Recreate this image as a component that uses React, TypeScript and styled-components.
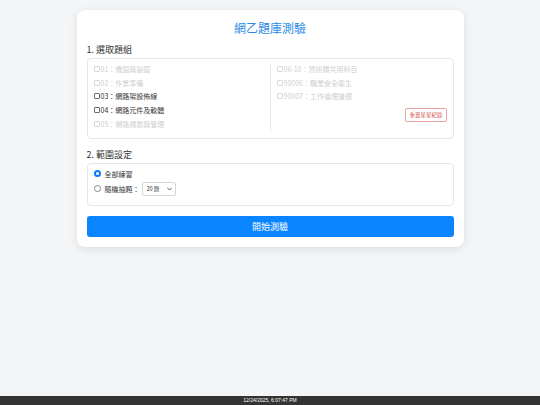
import React, { useState } from 'react';
import styled, { createGlobalStyle } from 'styled-components';

const GlobalStyle = createGlobalStyle`
  html, body {
    margin: 0;
    padding: 0;
    background: #f4f5f7;
    font-family: "Noto Sans CJK TC", "Liberation Sans", sans-serif;
    color: #333;
  }
  * { box-sizing: border-box; }
`;

const Page = styled.div`
  min-height: 100vh;
  display: flex;
  flex-direction: column;
`;

const Main = styled.main`
  flex: 1;
  padding-top: 10px;
`;

const Card = styled.div`
  width: 387px;
  margin: 0 auto;
  background: #fff;
  border-radius: 8px;
  box-shadow: 0 2px 8px rgba(0, 0, 0, 0.1);
  padding: 9px 10px 10px;
`;

const Title = styled.h1`
  margin: 0 0 6px;
  text-align: center;
  font-size: 12px;
  line-height: 18px;
  font-weight: 400;
  color: #2b8be6;
`;

const SectionTitle = styled.h2`
  margin: 0 0 2px;
  font-size: 9px;
  line-height: 13px;
  font-weight: 400;
  color: #333;
`;

const Box = styled.div`
  border: 1px solid #e6e6e6;
  border-radius: 4px;
  padding: 3px 6px 7px;
  margin-bottom: 9px;
`;

const Columns = styled.div`
  display: grid;
  grid-template-columns: 1fr 1px 1fr;
  column-gap: 6px;
`;

const Divider = styled.div`
  background: #e6e6e6;
  margin: 2px 0 0;
`;

const Column = styled.div`
  display: flex;
  flex-direction: column;
`;

const Item = styled.label<{ $disabled?: boolean }>`
  display: flex;
  align-items: center;
  gap: 1px;
  height: 13.75px;
  font-size: 7px;
  color: #333;
  opacity: ${({ $disabled }) => ($disabled ? 0.25 : 1)};
`;

const Check = styled.input`
  appearance: none;
  width: 6px;
  height: 6px;
  margin: 0;
  border: 1px solid #6b6b6b;
  border-radius: 1px;
  background: #fff;
`;

const ResetRow = styled.div`
  display: flex;
  justify-content: flex-end;
  margin-top: 5px;
`;

const ResetButton = styled.button`
  font-family: inherit;
  font-size: 5.5px;
  line-height: 8px;
  padding: 2px 3px;
  color: #d9534f;
  background: #fff;
  border: 1px solid #e9a3a1;
  border-radius: 2px;
`;

const RangeBox = styled(Box)`
  padding: 3px 6px 9px;
  margin-bottom: 10px;
  display: flex;
  flex-direction: column;
  gap: 1px;
`;

const RadioRow = styled.label`
  display: flex;
  align-items: center;
  gap: 3px;
  height: 14px;
  font-size: 7px;
  color: #333;
`;

const Radio = styled.input`
  appearance: none;
  width: 7px;
  height: 7px;
  margin: 0 1px 0 0;
  border-radius: 50%;
  border: 1px solid #8a8a8a;
  background: #fff;

  &:checked {
    border: 2px solid #0a7cff;
  }
`;

const SelectWrap = styled.div`
  position: relative;
  margin-left: -1px;
`;

const Select = styled.select`
  appearance: none;
  font-family: inherit;
  font-size: 5.5px;
  height: 14px;
  width: 34px;
  padding: 0 4px;
  border: 1px solid #d6d6d6;
  border-radius: 2px;
  background: #fff;
  color: #333;
`;

const Chevron = styled.svg`
  position: absolute;
  right: 4px;
  top: 5px;
  width: 5px;
  height: 4px;
  pointer-events: none;
`;

const StartButton = styled.button`
  display: block;
  width: 100%;
  height: 21px;
  border: none;
  border-radius: 3px;
  background: #0a84ff;
  color: #fff;
  font-family: inherit;
  font-size: 9px;
`;

const Footer = styled.footer`
  height: 9px;
  background: #333;
  color: #fff;
  font-family: "Liberation Sans", sans-serif;
  font-size: 5px;
  line-height: 9px;
  text-align: center;
`;

const leftItems = [
  { label: '01：識圖與製圖', disabled: true },
  { label: '02：作業準備', disabled: true },
  { label: '03：網路架設佈線', disabled: false },
  { label: '04：網路元件及軟體', disabled: false },
  { label: '05：網路規劃與管理', disabled: true },
];

const rightItems = [
  { label: '06-10：資訊類共用科目', disabled: true },
  { label: '90006：職業安全衛生', disabled: true },
  { label: '90007：工作倫理道德', disabled: true },
];

const App: React.FC = () => {
  const [mode, setMode] = useState('all');

  return (
    <Page>
      <GlobalStyle />
      <Main>
        <Card>
          <Title>網乙題庫測驗</Title>

          <SectionTitle>1. 選取題組</SectionTitle>
          <Box>
            <Columns>
              <Column>
                {leftItems.map((it) => (
                  <Item key={it.label} $disabled={it.disabled}>
                    <Check type="checkbox" disabled={it.disabled} />
                    {it.label}
                  </Item>
                ))}
              </Column>
              <Divider />
              <Column>
                {rightItems.map((it) => (
                  <Item key={it.label} $disabled={it.disabled}>
                    <Check type="checkbox" disabled={it.disabled} />
                    {it.label}
                  </Item>
                ))}
                <ResetRow>
                  <ResetButton>重置星星紀錄</ResetButton>
                </ResetRow>
              </Column>
            </Columns>
          </Box>

          <SectionTitle>2. 範圍設定</SectionTitle>
          <RangeBox>
            <RadioRow>
              <Radio type="radio" name="mode" checked={mode === 'all'} onChange={() => setMode('all')} />
              全部練習
            </RadioRow>
            <RadioRow>
              <Radio type="radio" name="mode" checked={mode === 'random'} onChange={() => setMode('random')} />
              隨機抽題：
              <SelectWrap>
                <Select defaultValue="20">
                  <option value="20">20 題</option>
                </Select>
                <Chevron viewBox="0 0 10 6">
                  <path d="M1 1l4 4 4-4" fill="none" stroke="#333" strokeWidth="1.6" strokeLinecap="round" strokeLinejoin="round" />
                </Chevron>
              </SelectWrap>
            </RadioRow>
          </RangeBox>

          <StartButton>開始測驗</StartButton>
        </Card>
      </Main>
      <Footer>12/24/2025, 6:07:47 PM</Footer>
    </Page>
  );
};

export default App;
